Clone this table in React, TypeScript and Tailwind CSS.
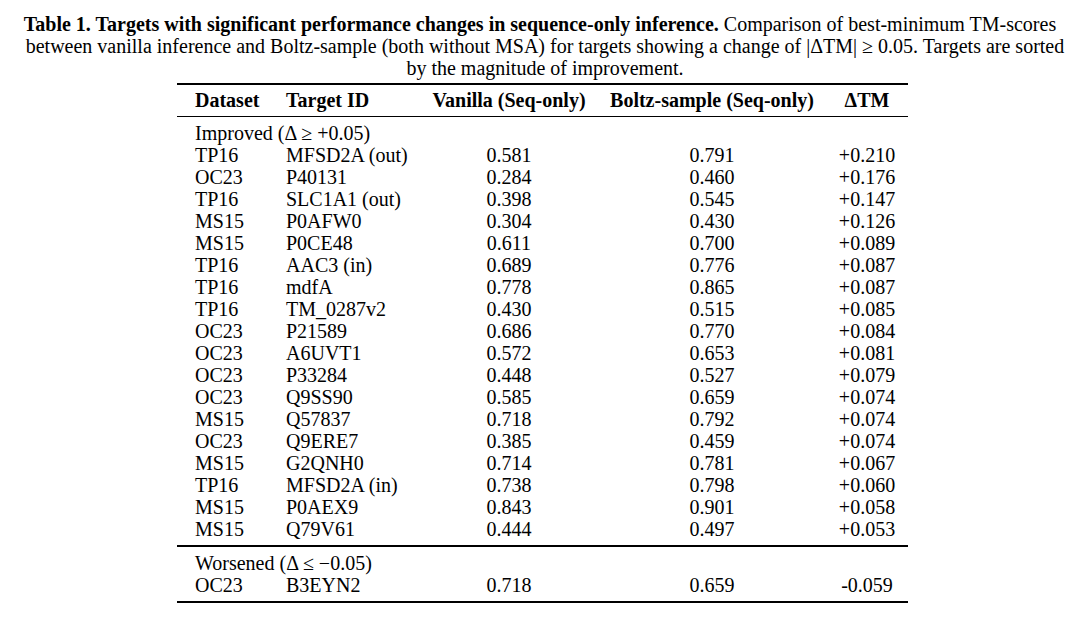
import React from "react";

const rows: [string, string, string, string, string][] = [
  ["TP16", "MFSD2A (out)", "0.581", "0.791", "+0.210"],
  ["OC23", "P40131", "0.284", "0.460", "+0.176"],
  ["TP16", "SLC1A1 (out)", "0.398", "0.545", "+0.147"],
  ["MS15", "P0AFW0", "0.304", "0.430", "+0.126"],
  ["MS15", "P0CE48", "0.611", "0.700", "+0.089"],
  ["TP16", "AAC3 (in)", "0.689", "0.776", "+0.087"],
  ["TP16", "mdfA", "0.778", "0.865", "+0.087"],
  ["TP16", "TM_0287v2", "0.430", "0.515", "+0.085"],
  ["OC23", "P21589", "0.686", "0.770", "+0.084"],
  ["OC23", "A6UVT1", "0.572", "0.653", "+0.081"],
  ["OC23", "P33284", "0.448", "0.527", "+0.079"],
  ["OC23", "Q9SS90", "0.585", "0.659", "+0.074"],
  ["MS15", "Q57837", "0.718", "0.792", "+0.074"],
  ["OC23", "Q9ERE7", "0.385", "0.459", "+0.074"],
  ["MS15", "G2QNH0", "0.714", "0.781", "+0.067"],
  ["TP16", "MFSD2A (in)", "0.738", "0.798", "+0.060"],
  ["MS15", "P0AEX9", "0.843", "0.901", "+0.058"],
  ["MS15", "Q79V61", "0.444", "0.497", "+0.053"],
];

const grid = "grid grid-cols-[91px_142px_198px_208px_92px] h-[22px] items-center";

function Row({ r }: { r: [string, string, string, string, string] }) {
  return (
    <div className={grid}>
      <div className="pl-[18px]">{r[0]}</div>
      <div className="pl-[18px]">{r[1]}</div>
      <div className="text-center">{r[2]}</div>
      <div className="text-center">{r[3]}</div>
      <div className="text-center pl-[10px]">{r[4]}</div>
    </div>
  );
}

export default function App() {
  return (
    <div
      className="w-[1080px] h-[627px] bg-white text-black overflow-hidden"
      style={{ fontFamily: '"Liberation Serif", "Times New Roman", serif' }}
    >
      <div className="pt-[13px] text-center text-[20px] leading-[22px] whitespace-nowrap">
        <div>
          <span className="font-bold">
            Table 1. Targets with significant performance changes in sequence-only inference.
          </span>{" "}
          Comparison of best-minimum TM-scores
        </div>
        <div className="pl-[10px]">
          between vanilla inference and Boltz-sample (both without MSA) for targets showing a change of |ΔTM| ≥ 0.05. Targets are sorted
        </div>
        <div className="pl-[10px]">by the magnitude of improvement.</div>
      </div>
      <div className="mt-[4px] ml-[177px] w-[731px] text-[20px] leading-[22px] whitespace-nowrap">
        <div className="h-[2px] bg-black" />
        <div className={grid + " mt-[4px] font-bold"}>
          <div className="pl-[18px]">Dataset</div>
          <div className="pl-[18px]">Target ID</div>
          <div className="text-center">Vanilla (Seq-only)</div>
          <div className="text-center">Boltz-sample (Seq-only)</div>
          <div className="text-center pl-[10px]">ΔTM</div>
        </div>
        <div className="mt-[5px] h-[1px] bg-black" />
        <div className="pt-[5px]">
          <div className="h-[22px] flex items-center pl-[18px]">Improved (Δ ≥ +0.05)</div>
          {rows.map((r, i) => (
            <Row key={i} r={r} />
          ))}
        </div>
        <div className="mt-[5px] h-[2px] bg-black" />
        <div className="pt-[5px]">
          <div className="h-[22px] flex items-center pl-[18px]">Worsened (Δ ≤ −0.05)</div>
          <Row r={["OC23", "B3EYN2", "0.718", "0.659", "-0.059"]} />
        </div>
        <div className="mt-[5px] h-[2px] bg-black" />
      </div>
    </div>
  );
}
